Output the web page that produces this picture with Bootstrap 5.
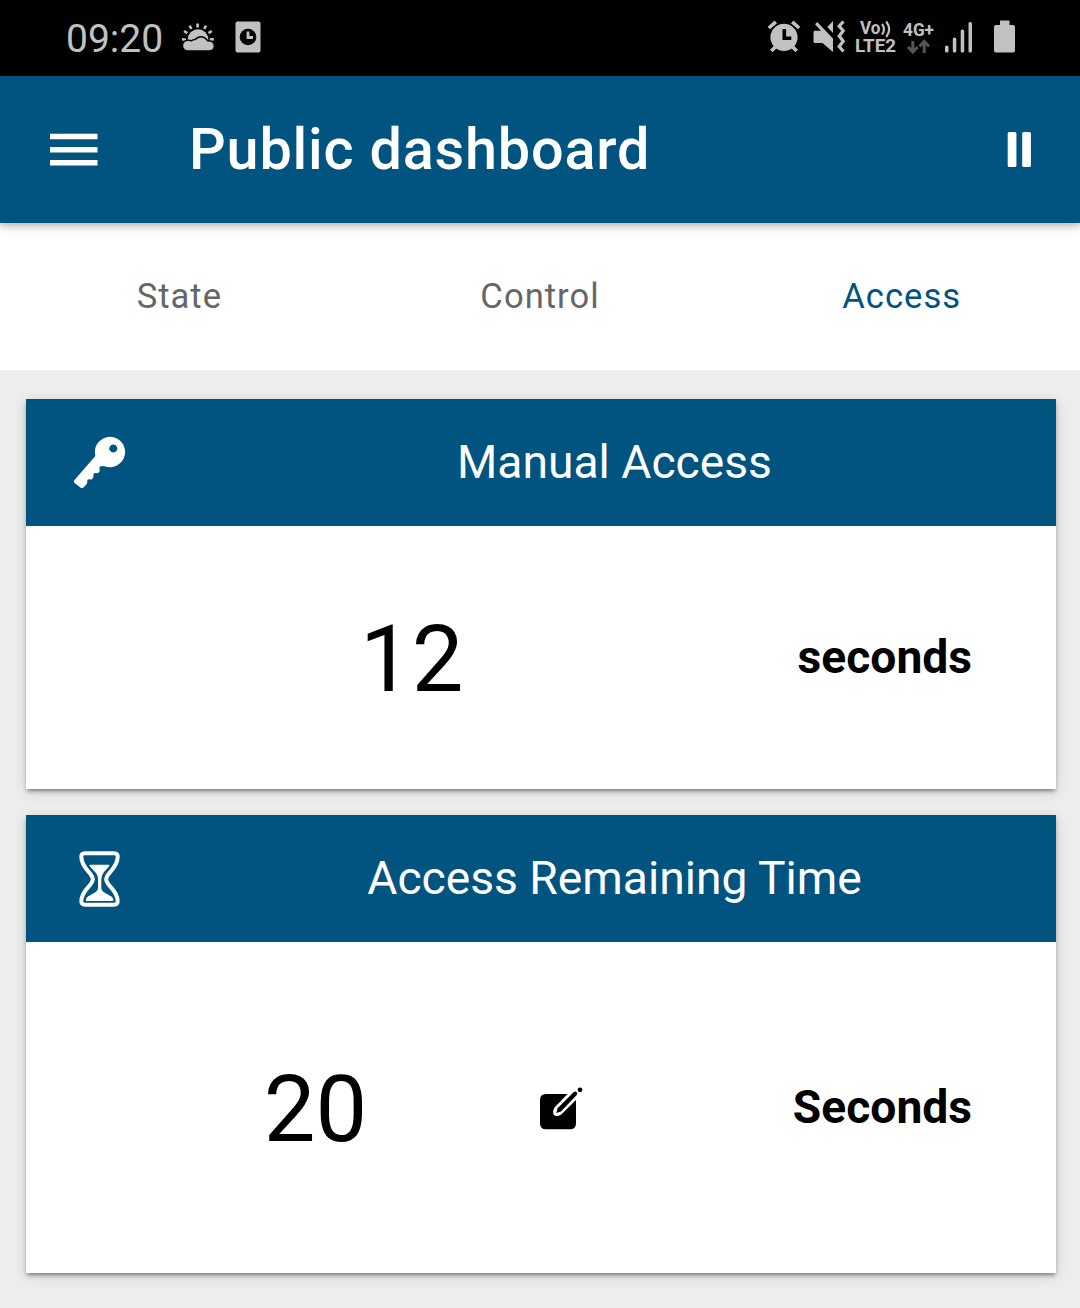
<!DOCTYPE html>
<html lang="en">
<head>
<meta charset="utf-8">
<meta name="viewport" content="width=device-width, initial-scale=1">
<title>Public dashboard</title>
<link href="https://cdn.jsdelivr.net/npm/bootstrap@5.3.0/dist/css/bootstrap.min.css" rel="stylesheet">
<style>
:root{--brand:#00547f;--status:#c1c1c1}
body{font-family:Roboto,sans-serif;background:#ededed;color:#000;width:1080px;min-height:1308px;overflow:hidden}
svg{display:block;flex:none}
.statusbar{height:76px;background:#000;color:var(--status);padding-left:66px}
.clock{font-size:39px;line-height:79px;width:114px}
.appbar{height:147px;background:var(--brand);color:#fff;padding:0 49px 0 49px;position:relative;box-shadow:0 2px 7px rgba(0,0,0,.28),0 5px 14px rgba(0,0,0,.08)}
.appbar h1{font-size:57.6px;font-weight:500;letter-spacing:.8px;line-height:1;margin-left:90px}
.tabs{height:147px;background:#fff}
.tabs .nav-link{font-size:34.6px;letter-spacing:1.02px;line-height:1;color:#666;padding:0 0 0 1px}
.tabs .nav-link.tab-mid{padding-left:4px}
.tabs .nav-link.active{color:var(--brand);padding-left:5px}
.panels{padding:29px 24px 35px 26px;gap:26px}
.panel{border:0;border-radius:0;box-shadow:0 3px 4px -1px rgba(0,0,0,.42),0 3px 12px rgba(0,0,0,.14)}
.panel-head{height:127px;background:var(--brand);color:#fff;font-size:46.2px;line-height:47px}
.icon-cell{width:148px}
.head-text{padding-bottom:1px;padding-right:1px}
.reading{font-size:92px;line-height:1;padding-top:4px}
.unit{font-size:46.2px;font-weight:700;line-height:47px;padding-right:84px;padding-bottom:1px}
.body-short{height:263px}
.body-tall{height:331px}
.reading-wide{width:774px}
.reading-narrow{width:513px;padding-left:66px}
.edit-icon{margin-top:3px}
</style>
<script src="https://cdn.jsdelivr.net/npm/bootstrap@5.3.0/dist/js/bootstrap.bundle.min.js"></script>
</head>
<body>
<div class="statusbar d-flex">
  <span class="clock">09:20</span>
  <!-- weather and clock notifications -->
  <svg width="90" height="76" viewBox="180 0 90 76" fill="#c1c1c1">
    <g stroke="#c1c1c1" stroke-width="2.6"><path d="M197.600 23.500v4M189.600 25.600l1.800 3.400M206 25.600l-1.800 3.400M184 31l3.300 2.200M211.800 31l-3.300 2.200M182 39.300l4 .4M213.800 39.100l-4 .5"/></g>
    <circle cx="198" cy="39.500" r="10.300"/>
    <path d="M187.800 50.300a4.600 4.600 0 0 1 0-9.300q2-.2 3.800.6 1.800-1.600 3.800-1.400 6.200-6 12 1.300 6.300-.2 6.200 4.400 0 4.400-5 4.400z" stroke="#000" stroke-width="3" paint-order="stroke"/>
    <rect x="235.500" y="21.500" width="25" height="31" rx="2"/><circle cx="248" cy="37" r="8.300" fill="#000"/>
    <path d="M248 31.500v6h5" fill="none" stroke="#c1c1c1" stroke-width="2.800"/>
  </svg>
  <!-- alarm, mute, network, signal and battery -->
  <svg class="ms-auto" width="315" height="76" viewBox="765 0 315 76" fill="#c1c1c1" font-family="Roboto, sans-serif">
    <circle cx="784" cy="37.300" r="13.600"/>
    <path d="M768.800 28l7-6.200M799.200 28l-7-6.200M771.300 51l5-5M796.700 51l-5-5" stroke="#c1c1c1" stroke-width="3.600"/>
    <path d="M784.300 29v9.300h7" fill="none" stroke="#000" stroke-width="3.600"/>
    <path d="M815 24.300l2.200-2.200 15.800 16.400v13.500l-10.500-9H815q-1.500 0-1.500-1.500V32.300q0-1.500 1.500-1.500h6z"/>
    <path d="M827.300 27l5.700-6v12z"/>
    <path d="M843.500 21.500l-4.300 4.500 4 4.700-4 5.300 4 5.300-4 5.200 4.300 5" fill="none" stroke="#c1c1c1" stroke-width="3.200"/>
    <text x="860" y="34.300" font-size="17.500" font-weight="700" textLength="20.500" lengthAdjust="spacingAndGlyphs">Vo</text>
    <path d="M882 24q4 5 0 10.500M886.200 21.500q6 7.700 0 15.500" fill="none" stroke="#c1c1c1" stroke-width="2.200"/>
    <text x="855" y="51.900" font-size="17.600" font-weight="700" textLength="41" lengthAdjust="spacingAndGlyphs">LTE2</text>
    <text x="903" y="35.500" font-size="18" font-weight="700" textLength="31" lengthAdjust="spacingAndGlyphs">4G+</text>
    <path d="M912.800 41v10M908 47l4.800 5 4.800-5M924.200 53V43M919.400 46.500l4.800-5 4.800 5" fill="none" stroke="#555" stroke-width="3"/>
    <rect x="945" y="45.500" width="3.500" height="7" rx="1.500"/><rect x="952.800" y="37.500" width="3.500" height="15" rx="1.500"/><rect x="960.700" y="29.500" width="3.500" height="23" rx="1.500"/><rect x="968.500" y="22" width="3.500" height="30.500" rx="1.500"/>
    <path d="M1000 20.500h9.500v4.500h3.500q2 0 2 2v23.500q0 2-2 2h-17q-2 0-2-2V27q0-2 2-2h4z"/>
  </svg>
</div>

<header class="appbar d-flex align-items-center">
  <svg width="50" height="34" viewBox="0 0 50 34" fill="#fff"><path d="M1 .7h47.500v5.500H1zM1 13.900h47.500v5.500H1zM1 27h47.500v5.500H1z"/></svg>
  <h1 class="mb-0">Public dashboard</h1>
  <svg class="ms-auto" width="24" height="36" viewBox="0 0 24 36" fill="#fff"><rect x="0.700" y="0" width="8.700" height="35" rx="1.500"/><rect x="15.200" y="0" width="8.700" height="35" rx="1.500"/></svg>
</header>

<nav class="tabs nav nav-justified align-items-center">
  <a class="nav-link col" href="#">State</a>
  <a class="nav-link col tab-mid" href="#">Control</a>
  <a class="nav-link col active" href="#">Access</a>
</nav>

<main class="panels d-flex flex-column">
  <section class="panel card">
    <div class="panel-head d-flex align-items-center">
      <div class="icon-cell d-flex justify-content-center">
        <svg width="60" height="60" viewBox="70 432 60 60" fill="#fff"><path fill-rule="evenodd" d="M110 435.800a15.200 15.200 0 1 1-5.500 29.400q-2.500-.8-4.300.4-1.500 1.200-.6 3 .8 2.200-1.200 3.200-1.200.6-3 .3-2.300 0-2 2.200.6 2.400-1.200 3.600-1.200.8-3 .4-2.300 0-2 2 .4 2-.8 3.200l-3 3q-1.500 1.200-3 0l-5.500-4.200q-2-1.800-.2-3.600l20.700-23.600A15.200 15.200 0 0 1 110 435.800zm3.300 7.700a4 4 0 1 0 .01 0z"/></svg>
      </div>
      <div class="head-text flex-fill text-center">Manual Access</div>
    </div>
    <div class="body-short d-flex align-items-center">
      <div class="reading reading-wide text-center">12</div>
      <div class="unit ms-auto">seconds</div>
    </div>
  </section>

  <section class="panel card">
    <div class="panel-head d-flex align-items-center">
      <div class="icon-cell d-flex justify-content-center">
        <svg width="60" height="60" viewBox="70 848.500 60 60"><path d="M85 852.700h29q4 0 3.700 4c-.5 12-11.500 15.500-11.500 22s11 10.500 11.500 21.500q.3 4-3.700 4H85q-4 0-3.700-4c.5-11 11.500-15 11.500-21.500s-11-10-11.500-22q-.3-4 3.700-4z" fill="none" stroke="#fff" stroke-width="4"/><path d="M90 864.300h19q1 .8 0 1.800l-5 5.500q-2.700 3-2.700 7.500v8q0 3.500 4 5.500l6 3.500q2.700 2 1.900 4.500H86.100q-.8-2.500 1.900-4.500l6-3.500q4-2 4-5.500v-8q0-4.500-3-7.500l-5-5.500q-1-1 0-1.800z" fill="#fff"/></svg>
      </div>
      <div class="head-text flex-fill text-center">Access Remaining Time</div>
    </div>
    <div class="body-tall d-flex align-items-center">
      <div class="reading reading-narrow text-center">20</div>
      <svg class="edit-icon" width="44" height="44" viewBox="539 1087 44 44"><path d="M546 1094h21.500l-13 13.500q-2.500 4.500-.5 7.500 2.500 2.200 7-.3l15-14.700v23.200q0 6-6 6H546q-6 0-6-6V1100q0-6 6-6z"/><path d="M556.300 1113l1.300-4.800 16.200-16.200q1.800-1 2.900.2 1.100 1.200 0 2.900L561 1111.400z"/><circle cx="580" cy="1089.800" r="2.400"/></svg>
      <div class="unit ms-auto">Seconds</div>
    </div>
  </section>
</main>
</body>
</html>
